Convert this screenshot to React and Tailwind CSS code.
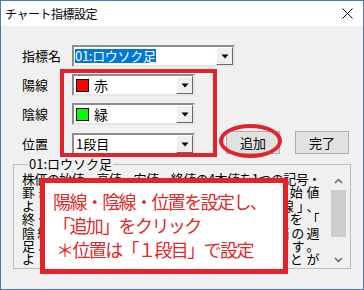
import React from 'react';

const FONT = { fontFamily: '"Noto Sans CJK JP", "Noto Sans", sans-serif' };

// small black triangle drop button
const DropButton = () => (
  <div className="w-[17px] h-full bg-[#f0f0f0] border border-t-white border-l-white border-r-[#696969] border-b-[#696969] flex items-center justify-center">
    <svg width="8" height="5" viewBox="0 0 8 5">
      <path d="M0.5 0.5 L7.5 0.5 L4 4.5 Z" fill="#000" />
    </svg>
  </div>
);

const Combo = ({ width, children }) => (
  <div
    className="h-[22px] bg-white border-2 border-t-[#8c8c8c] border-l-[#8c8c8c] border-r-[#e6e6e6] border-b-[#e6e6e6] flex items-center"
    style={{ width }}
  >
    <div className="flex-1 flex items-center pl-[1px] text-[13px] text-black whitespace-nowrap">
      {children}
    </div>
    <DropButton />
  </div>
);

const Swatch = ({ color }) => (
  <span className="inline-block w-[13px] h-[13px] border border-black ml-[1px] mr-[5px]" style={{ background: color }} />
);

const Btn = ({ children }) => (
  <div className="w-[54px] h-[23px] bg-[#e1e1e1] border border-[#adadad] flex items-center justify-center text-[13px] text-black">
    {children}
  </div>
);

const lines = [
  '株価の始値、高値、安値、終値の4本値を1つの記号・',
  '罫線で表したものです。一定期間の始値',
  'より終値が高いものを白で表し「陽線」、',
  '終値が安いものを黒で表し、その足を「',
  '陰線」と呼びます。日足や1週間の株価の週',
  '足、1ヶ月の株価の月足などがあります。',
  'よって、相場の流れを一目で見ることが',
];

export default function App() {
  return (
    <div className="relative w-[364px] h-[290px] border border-[#4a78b5] bg-[#f0f0f0] flex flex-col overflow-hidden" style={FONT}>
      {/* title bar */}
      <div className="h-[25px] bg-white flex items-center justify-between pl-[4px] pr-[10px] shrink-0">
        <span className="text-[12px] text-black tracking-[-0.5px]">チャート指標設定</span>
        <svg width="11" height="11" viewBox="0 0 11 11">
          <path d="M0.5 0.5 L10.5 10.5 M10.5 0.5 L0.5 10.5" stroke="#000" strokeWidth="1" />
        </svg>
      </div>

      {/* body */}
      <div className="flex flex-col px-[12px]">
        <div className="mt-[19px] pl-[9px] flex items-center h-[22px]">
          <span className="w-[50px] text-[13px] text-black">指標名</span>
          <Combo width={163}>
            <span className="bg-[#0078d7] text-white leading-[14px] tracking-[-0.3px]">01:ロウソク足</span>
          </Combo>
        </div>

        <div className="mt-[7px] pl-[9px] flex items-center h-[22px]">
          <span className="w-[50px] text-[13px] text-black">陽線</span>
          <Combo width={123}>
            <Swatch color="#ff0000" />
            <span className="text-[14px]">赤</span>
          </Combo>
        </div>

        <div className="mt-[7px] pl-[9px] flex items-center h-[22px]">
          <span className="w-[50px] text-[13px] text-black">陰線</span>
          <Combo width={123}>
            <Swatch color="#00ff00" />
            <span className="text-[14px]">緑</span>
          </Combo>
        </div>

        <div className="mt-[8px] pl-[9px] flex items-center h-[22px]">
          <span className="w-[50px] text-[13px] text-black">位置</span>
          <Combo width={123}>
            <span className="pl-[1px]">1段目</span>
          </Combo>
          <div className="ml-[31px] -mt-[3px] flex gap-[15px]">
            <Btn>追加</Btn>
            <Btn>完了</Btn>
          </div>
        </div>

        {/* group box */}
        <fieldset className="mt-[1px] h-[113px] border border-[#bdbdbd] pl-[8px] pr-[3px] pb-[3px]">
          <legend className="ml-[6px] px-[1px] text-[13px] text-black leading-[16px]">01:ロウソク足</legend>
          <div className="flex h-[96px]">
            <div className="w-[297px] text-[13px] leading-[13.4px] text-black">
              {lines.map((l, i) => (
                <div key={i} className="whitespace-nowrap text-justify [text-align-last:justify] tracking-[-0.6px]">
                  {l}
                </div>
              ))}
            </div>
            <div className="ml-auto w-[17px] h-full flex flex-col items-center">
              <div className="h-[17px] flex items-center justify-center">
                <svg width="9" height="6" viewBox="0 0 9 6">
                  <path d="M1 5 L4.5 1.5 L8 5" stroke="#606060" strokeWidth="1.4" fill="none" />
                </svg>
              </div>
              <div className="mt-[1px] w-[15px] h-[47px] bg-[#cdcdcd]" />
              <div className="mt-auto h-[17px] flex items-center justify-center">
                <svg width="9" height="6" viewBox="0 0 9 6">
                  <path d="M1 1 L4.5 4.5 L8 1" stroke="#606060" strokeWidth="1.4" fill="none" />
                </svg>
              </div>
            </div>
          </div>
        </fieldset>
      </div>

      {/* annotations */}
      <div className="absolute left-[59px] top-[68px] w-[157px] h-[88px] border-[4px] border-[#e3232b]" />
      <div className="absolute left-[218px] top-[123px] w-[63px] h-[34px] rounded-[50%] border-[4px] border-[#e3232b]" />
      <div className="absolute left-[39px] top-[177px] w-[248px] h-[96px] border-[5px] border-[#e3232b] bg-white pl-[8px] pt-[6px] text-[#e02a2a] text-[18px] leading-[24px] tracking-[-1.6px]">
        <div className="whitespace-nowrap">陽線・陰線・位置を設定し、</div>
        <div className="whitespace-nowrap">「追加」をクリック</div>
        <div className="whitespace-nowrap pl-[3px]">＊位置は「１段目」で設定</div>
      </div>
    </div>
  );
}
